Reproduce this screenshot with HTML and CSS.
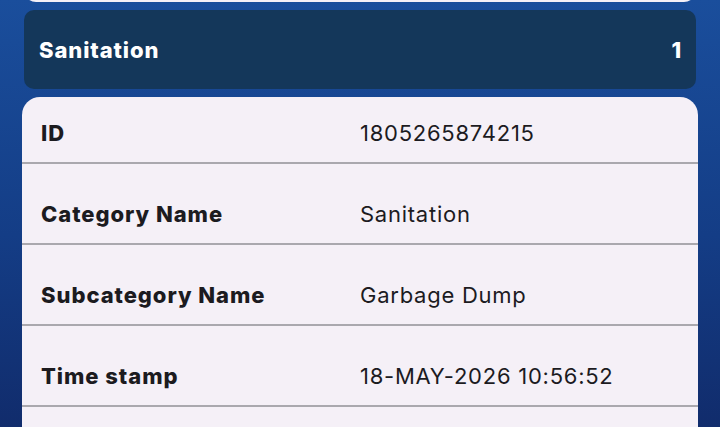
FILE: index.html
```html
<!DOCTYPE html>
<html lang="en">
<head>
<meta charset="utf-8">
<title>Complaint details</title>
<link rel="stylesheet" href="styles.css">
</head>
<body>
<div class="page">
  <div class="prev-card"></div>
  <div class="group-header">
    <span class="group-title">Sanitation</span>
    <span class="group-count">1</span>
  </div>
  <div class="detail-card">
    <div class="row row-first">
      <span class="label">ID</span>
      <span class="value">1805265874215</span>
    </div>
    <div class="row">
      <span class="label">Category Name</span>
      <span class="value">Sanitation</span>
    </div>
    <div class="row">
      <span class="label">Subcategory Name</span>
      <span class="value">Garbage Dump</span>
    </div>
    <div class="row">
      <span class="label">Time stamp</span>
      <span class="value">18-MAY-2026 10:56:52</span>
    </div>
    <div class="row"></div>
  </div>
</div>
</body>
</html>
```
FILE: styles.css
```css
* { box-sizing: border-box; }
html, body { margin: 0; padding: 0; }
body {
  width: 720px;
  height: 427px;
  overflow: hidden;
  background: linear-gradient(to bottom, #1a4e9c 0%, #143d86 55%, #112c6c 100%);
  font-family: Inter, "Noto Sans", sans-serif;
  color: #1c1b1f;
}
.page {
  padding: 0 24px;
  display: flex;
  flex-direction: column;
  gap: 8px;
}
.prev-card {
  margin-top: -38px;
  height: 40px;
  background: #f5f0f7;
  border-radius: 12px;
}
.group-header {
  height: 79px;
  background: #14375a;
  border-radius: 10px;
  display: flex;
  align-items: center;
  justify-content: space-between;
  padding: 0 14px 0 15px;
  color: #ffffff;
  font-weight: 800;
  font-size: 22px;
  letter-spacing: 0.9px;
}
.detail-card {
  margin: 0 -2px;
  background: #f5f0f7;
  border-radius: 18px 18px 0 0;
  overflow: hidden;
}
.row {
  height: 81px;
  display: flex;
  align-items: flex-end;
  padding: 0 0 17px 19px;
  border-bottom: 2px solid #aaa8ae;
  font-size: 22px;
  line-height: 24px;
}
.row-first { height: 67px; }
.label {
  width: 319px;
  font-weight: 800;
  letter-spacing: 0.95px;
}
.value {
  font-weight: 400;
  letter-spacing: 0.75px;
}
```
